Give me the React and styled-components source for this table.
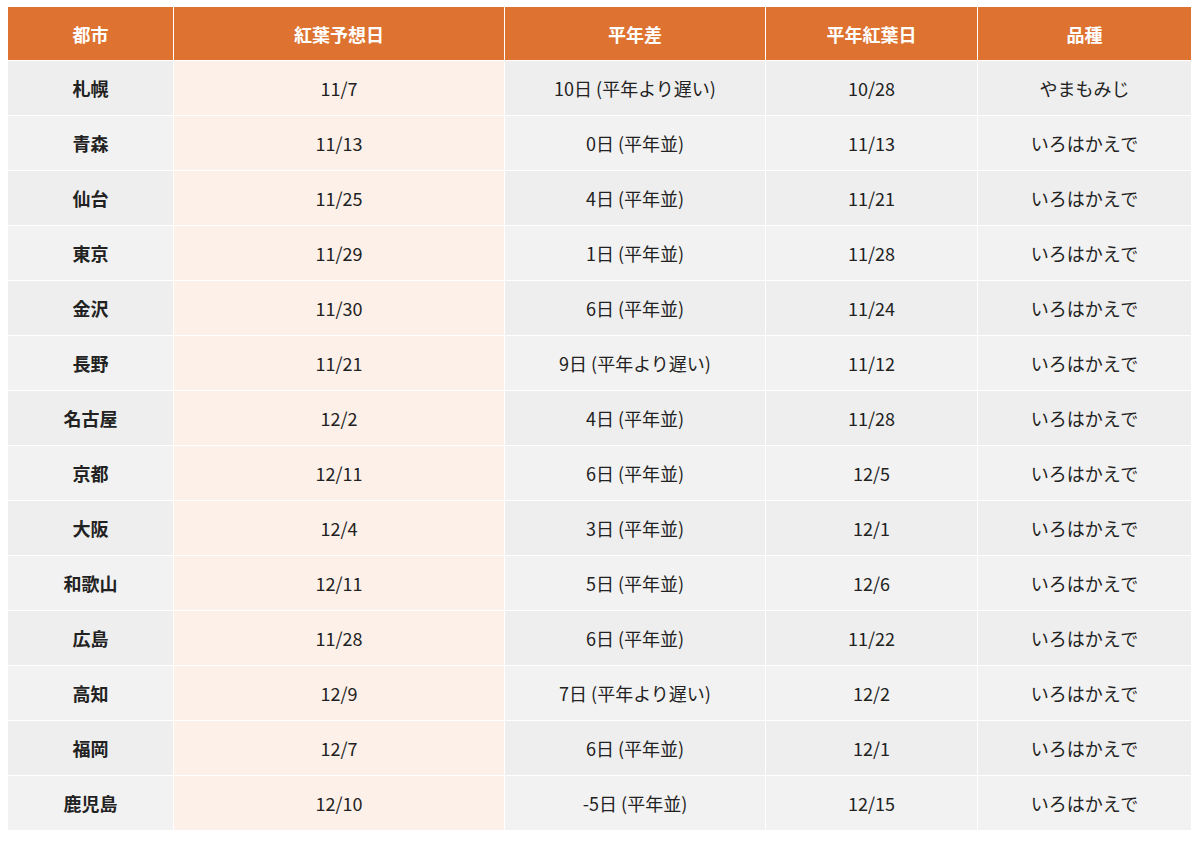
import React from 'react'
import styled, { createGlobalStyle } from 'styled-components'

const GlobalStyle = createGlobalStyle`
    body {
        margin: 0;
        background: #fff;
        font-family: "Noto Sans CJK JP", "Noto Sans", sans-serif;
    }
`

const Page = styled.div`
    padding: 7px 8px 10px 7px;
`

const Table = styled.table`
    width: 1184px;
    border-collapse: collapse;
    table-layout: fixed;
`

const HeadCell = styled.th`
    height: 53px;
    padding: 0;
    background: #de7230;
    color: #fff;
    font-size: 18px;
    font-weight: 700;
    text-align: center;
    border: 1px solid #fff;
    border-top: none;
`

const Row = styled.tr`
    background: ${p => (p.$odd ? '#eeeeee' : '#f2f2f2')};
`

const Cell = styled.td`
    height: 54px;
    padding: 0;
    text-align: center;
    font-size: 18px;
    color: #222;
    border: 1px solid #fff;
    font-weight: ${p => (p.$bold ? 700 : 400)};
    background: ${p => (p.$accent ? '#fdf0e8' : 'transparent')};
`

const columns = [
    { label: '都市', width: 166 },
    { label: '紅葉予想日', width: 331 },
    { label: '平年差', width: 261 },
    { label: '平年紅葉日', width: 212 },
    { label: '品種', width: 214 },
]

const rows = [
    ['札幌', '11/7', '10日 (平年より遅い)', '10/28', 'やまもみじ'],
    ['青森', '11/13', '0日 (平年並)', '11/13', 'いろはかえで'],
    ['仙台', '11/25', '4日 (平年並)', '11/21', 'いろはかえで'],
    ['東京', '11/29', '1日 (平年並)', '11/28', 'いろはかえで'],
    ['金沢', '11/30', '6日 (平年並)', '11/24', 'いろはかえで'],
    ['長野', '11/21', '9日 (平年より遅い)', '11/12', 'いろはかえで'],
    ['名古屋', '12/2', '4日 (平年並)', '11/28', 'いろはかえで'],
    ['京都', '12/11', '6日 (平年並)', '12/5', 'いろはかえで'],
    ['大阪', '12/4', '3日 (平年並)', '12/1', 'いろはかえで'],
    ['和歌山', '12/11', '5日 (平年並)', '12/6', 'いろはかえで'],
    ['広島', '11/28', '6日 (平年並)', '11/22', 'いろはかえで'],
    ['高知', '12/9', '7日 (平年より遅い)', '12/2', 'いろはかえで'],
    ['福岡', '12/7', '6日 (平年並)', '12/1', 'いろはかえで'],
    ['鹿児島', '12/10', '-5日 (平年並)', '12/15', 'いろはかえで'],
]

export default function App() {
    return (
        <Page>
            <GlobalStyle />
            <Table>
                <colgroup>
                    {columns.map(c => <col key={c.label} style={{ width: c.width }} />)}
                </colgroup>
                <thead>
                    <tr>
                        {columns.map(c => <HeadCell key={c.label}>{c.label}</HeadCell>)}
                    </tr>
                </thead>
                <tbody>
                    {rows.map((r, i) => (
                        <Row key={r[0]} $odd={i % 2 === 0}>
                            {r.map((v, j) => (
                                <Cell key={j} $bold={j === 0} $accent={j === 1}>{v}</Cell>
                            ))}
                        </Row>
                    ))}
                </tbody>
            </Table>
        </Page>
    )
}
